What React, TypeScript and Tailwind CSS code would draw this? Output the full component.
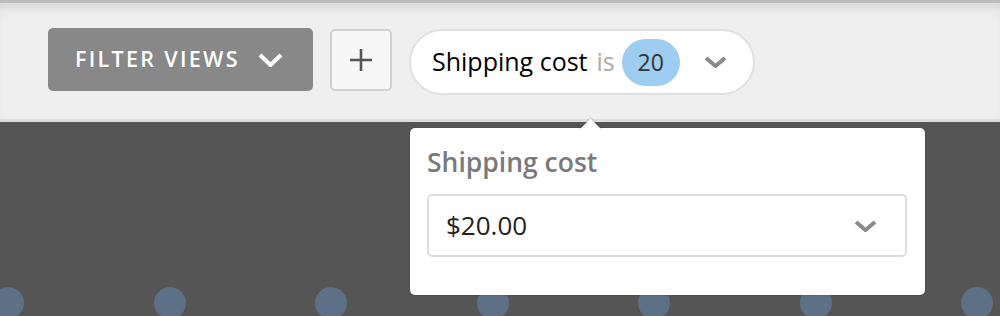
const dots = [0, 1, 2, 3, 4, 5, 6];

function Chevron({ className, w = 24, h = 13, stroke = 4 }: { className?: string; w?: number; h?: number; stroke?: number }) {
  return (
    <svg className={className} width={w} height={h} viewBox={`0 0 ${w} ${h}`} fill="none">
      <polyline
        points={`${stroke / 2},${stroke / 2} ${w / 2},${h - stroke / 2} ${w - stroke / 2},${stroke / 2}`}
        stroke="currentColor"
        strokeWidth={stroke}
        strokeLinecap="butt"
        strokeLinejoin="miter"
      />
    </svg>
  );
}

export default function App() {
  return (
    <div className="relative h-[316px] w-[1000px] overflow-hidden bg-[#555555] font-['Open_Sans',sans-serif]">
      {/* toolbar */}
      <div className="h-[122px] border-t-[3px] border-b-[3px] border-t-[#bdbdbd] border-b-[#dcdcdc] bg-[#efefef] shadow-[inset_0_10px_12px_-6px_rgba(0,0,0,0.12)]">
        <div className="flex items-start gap-[17px] pl-12 pt-[25px]">
          <button className="flex h-[63px] w-[265px] items-center rounded-[5px] bg-[#888888] pl-[27px] text-white">
            <span className="text-[21.5px] font-semibold tracking-[2.3px]">FILTER VIEWS</span>
            <Chevron className="ml-[18px]" w={25} h={14} stroke={4} />
          </button>
          <button className="mt-[1px] flex h-[62px] w-[62px] items-center justify-center rounded-[5px] border-2 border-[#d0d0d0] bg-[#f7f7f7] text-[#555]">
            <svg width="22" height="22" viewBox="0 0 22 22">
              <path d="M11 0v22M0 11h22" stroke="currentColor" strokeWidth="2.6" />
            </svg>
          </button>
          <div className="mt-[1px] flex h-[66px] w-[346px] items-center rounded-full border-2 border-[#e0e0e0] bg-white pl-[21px]">
            <span className="text-[25px] font-medium text-black">Shipping cost</span>
            <span className="ml-[9px] text-[25px] text-[#ababab]">is</span>
            <span className="ml-[7px] flex h-[47px] w-[58px] items-center justify-center rounded-full bg-[#9dcdf0] text-[23px] text-[#333]">20</span>
            <Chevron className="ml-[24px] text-[#8a8a8a]" w={23} h={12} stroke={4} />
          </div>
        </div>
      </div>

      {/* dots */}
      <div className="ml-[-8px] mt-[165px] flex gap-[129.5px]">
        {dots.map((d) => (
          <div key={d} className="h-[32px] w-[32px] shrink-0 rounded-full bg-[#5e7085]" />
        ))}
      </div>

      {/* popover */}
      <div className="absolute left-[410px] top-[128px] h-[167px] w-[515px] rounded-[5px] bg-white px-[17px] pt-[16px] shadow-[0_0_2px_rgba(0,0,0,0.25)]">
        <div className="absolute left-[172px] top-[-6px] h-[17px] w-[17px] rotate-45 bg-white shadow-[-1px_-1px_1px_rgba(0,0,0,0.12)]" />
        <div className="relative text-[26.5px] leading-[36px] font-semibold text-[#7a7a7a]">Shipping cost</div>
        <div className="relative mt-[14px] flex h-[63px] w-[480px] items-center justify-between rounded-[5px] border-2 border-[#dddddd] pl-[17px] pr-[28px]">
          <span className="text-[26px] text-[#222]">$20.00</span>
          <Chevron className="text-[#8a8a8a]" w={23} h={12} stroke={4} />
        </div>
      </div>
    </div>
  );
}
